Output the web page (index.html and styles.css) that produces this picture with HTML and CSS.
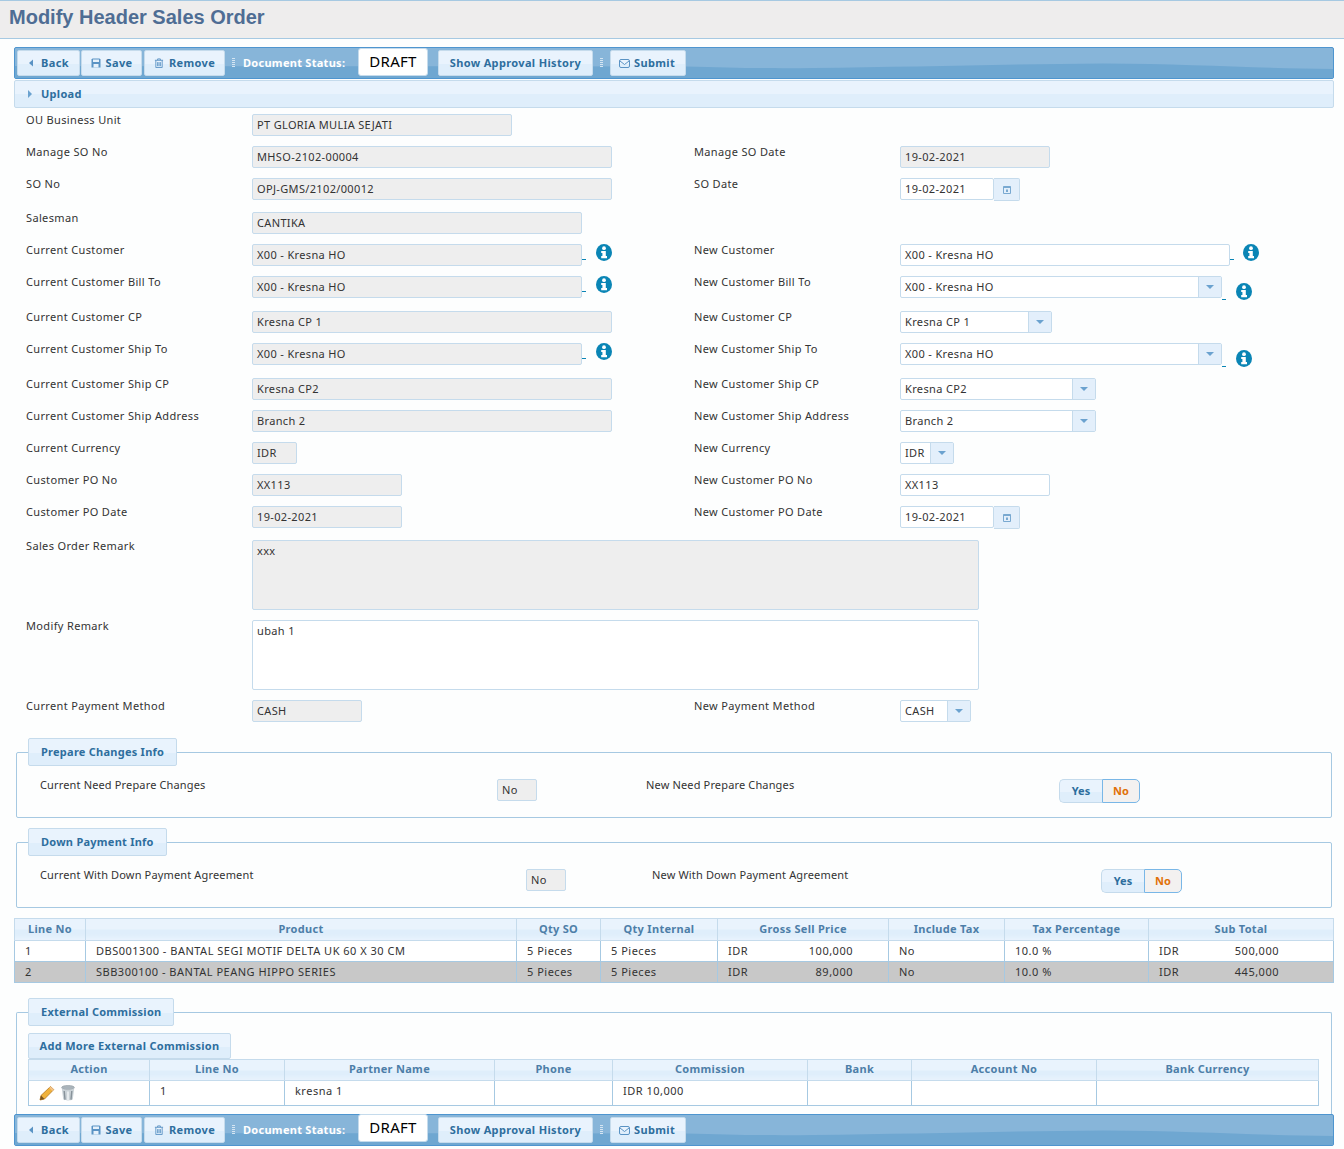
FILE: index.html
```html
<!DOCTYPE html>
<html lang="en">
<head>
<meta charset="utf-8">
<title>Modify Header Sales Order</title>
<link rel="stylesheet" href="styles.css">
</head>
<body>
<svg class="sprite" width="0" height="0" aria-hidden="true">
  <symbol id="i-back" viewBox="0 0 6 8"><path d="M5 0.5V7.5L1 4Z" fill="#5a93c4"/></symbol>
  <symbol id="i-save" viewBox="0 0 10 10"><path d="M1.5 0.5H8.5L9.5 1.5V9.5H0.5V1.5Z" fill="#5a93c4"/><rect x="2" y="1.5" width="6" height="2.5" fill="#e6f1fb"/><rect x="2.5" y="6" width="5" height="3.5" fill="#e6f1fb"/></symbol>
  <symbol id="i-trash" viewBox="0 0 10 11"><path d="M0.5 2.5H9.5M3.5 2.5V1H6.5V2.5M1.5 2.5V10.5H8.5V2.5M3.5 4.5V9M5 4.5V9M6.5 4.5V9" fill="none" stroke="#5a93c4"/></symbol>
  <symbol id="i-mail" viewBox="0 0 11 9"><rect x="0.5" y="0.5" width="10" height="8" rx="1.5" fill="none" stroke="#5a93c4"/><path d="M1 2L5.5 5.5L10 2" fill="none" stroke="#5a93c4"/></symbol>
  <symbol id="i-cal" viewBox="0 0 8 9"><path d="M0.5 1.5H7.5V8.5H0.5Z" fill="none" stroke="#79a9d1"/><path d="M0.5 1.5H7.5V3H0.5Z" fill="#79a9d1"/><rect x="3" y="4.5" width="2" height="2.5" fill="#79a9d1"/></symbol>
  <symbol id="i-info" viewBox="0 0 16 17"><ellipse cx="8" cy="8.5" rx="8" ry="8.5" fill="#0a85b5"/><circle cx="8" cy="4.2" r="1.9" fill="#fff"/><path d="M5.2 7H9.8V12H11V14.2H5.2V12H6.4V9.1H5.2Z" fill="#fff"/></symbol>
  <symbol id="i-pencil" viewBox="0 0 16 16"><path d="M1 15L2 10.5L11.5 1.5L14.8 4.6L5.5 14Z" fill="#f0b23c" stroke="#b5761c" stroke-width="0.8"/><path d="M11.5 1.5L14.8 4.6L13.4 6L10.2 2.8Z" fill="#f3c48e"/><path d="M1 15L2 10.5L5.5 14Z" fill="#7b5423"/></symbol>
  <symbol id="i-bin" viewBox="0 0 14 16"><ellipse cx="7" cy="2.6" rx="6.4" ry="2.2" fill="#aab4bb" stroke="#8d979e" stroke-width="0.6"/><path d="M0.8 3.2L2.2 14.2C3.4 15.8 10.6 15.8 11.8 14.2L13.2 3.2C10.5 5.2 3.5 5.2 0.8 3.2Z" fill="#c9d1d6"/><path d="M3.2 6L4 14.6M10.8 6L10 14.6" stroke="#87929a" stroke-width="1.4" fill="none"/><path d="M7 6.5V15" stroke="#eef2f4" stroke-width="1.6" fill="none"/></symbol>
  <symbol id="i-wave" viewBox="0 0 1320 30" preserveAspectRatio="none"><path d="M0 18L672 18.5C720 20 760 20.5 800 20C900 19 1000 16 1090 15.5C1180 16 1250 20.5 1320 21V30H0Z" fill="#6fa7d1"/></symbol>
</svg>

<header class="page-head"><h1>Modify Header Sales Order</h1></header>

<main class="content">
  <div class="toolbar">
    <svg class="wave"><use href="#i-wave"/></svg>
    <a class="btn btn-back"><svg class="ic-back"><use href="#i-back"/></svg>Back</a>
    <a class="btn btn-save"><svg class="ic"><use href="#i-save"/></svg>Save</a>
    <a class="btn btn-remove"><svg class="ic"><use href="#i-trash"/></svg>Remove</a>
    <span class="grip"></span>
    <span class="status-label">Document Status:</span>
    <span class="draft">DRAFT</span>
    <a class="btn btn-history">Show Approval History</a>
    <span class="grip grip-tight"></span>
    <a class="btn btn-submit"><svg class="ic-mail"><use href="#i-mail"/></svg>Submit</a>
  </div>

  <div class="upload"><i class="tri"></i>Upload</div>

  <section class="form">
    <div class="row"><label>OU Business Unit</label><div class="f ro w260">PT GLORIA MULIA SEJATI</div></div>
    <div class="row"><label>Manage SO No</label><div class="f ro w360">MHSO-2102-00004</div><label>Manage SO Date</label><div class="f ro w150">19-02-2021</div></div>
    <div class="row g11"><label>SO No</label><div class="f ro w360">OPJ-GMS/2102/00012</div><label>SO Date</label><div class="group"><div class="f w94">19-02-2021</div><span class="calbtn"><svg class="ic-cal"><use href="#i-cal"/></svg></span></div></div>
    <div class="row"><label>Salesman</label><div class="f ro w330">CANTIKA</div></div>
    <div class="row"><label>Current Customer</label><div class="group"><div class="f ro w330">X00 - Kresna HO</div><span class="us"></span><svg class="info"><use href="#i-info"/></svg></div><label>New Customer</label><div class="group"><div class="f w330">X00 - Kresna HO</div><span class="us"></span><svg class="info info-wide"><use href="#i-info"/></svg></div></div>
    <div class="row g11"><label>Current Customer Bill To</label><div class="group"><div class="f ro w330">X00 - Kresna HO</div><span class="us"></span><svg class="info"><use href="#i-info"/></svg></div><label>New Customer Bill To</label><div class="group"><div class="f combo w322">X00 - Kresna HO<b class="arrow"></b></div><span class="us us-low"></span><svg class="info info-low"><use href="#i-info"/></svg></div></div>
    <div class="row"><label>Current Customer CP</label><div class="f ro w360">Kresna CP 1</div><label>New Customer CP</label><div class="f combo w152">Kresna CP 1<b class="arrow"></b></div></div>
    <div class="row g11"><label>Current Customer Ship To</label><div class="group"><div class="f ro w330">X00 - Kresna HO</div><span class="us"></span><svg class="info"><use href="#i-info"/></svg></div><label>New Customer Ship To</label><div class="group"><div class="f combo w322">X00 - Kresna HO<b class="arrow"></b></div><span class="us us-low"></span><svg class="info info-low"><use href="#i-info"/></svg></div></div>
    <div class="row"><label>Current Customer Ship CP</label><div class="f ro w360">Kresna CP2</div><label>New Customer Ship CP</label><div class="f combo w196">Kresna CP2<b class="arrow"></b></div></div>
    <div class="row"><label>Current Customer Ship Address</label><div class="f ro w360">Branch 2</div><label>New Customer Ship Address</label><div class="f combo w196">Branch 2<b class="arrow"></b></div></div>
    <div class="row"><label>Current Currency</label><div class="f ro w45">IDR</div><label>New Currency</label><div class="f combo w54">IDR<b class="arrow"></b></div></div>
    <div class="row"><label>Customer PO No</label><div class="f ro w150">XX113</div><label>New Customer PO No</label><div class="f w150">XX113</div></div>
    <div class="row g11"><label>Customer PO Date</label><div class="f ro w150">19-02-2021</div><label>New Customer PO Date</label><div class="group"><div class="f w94">19-02-2021</div><span class="calbtn"><svg class="ic-cal"><use href="#i-cal"/></svg></span></div></div>
    <div class="row"><label>Sales Order Remark</label><div class="f ro area">xxx</div></div>
    <div class="row"><label>Modify Remark</label><div class="f area">ubah 1</div></div>
    <div class="row g16"><label>Current Payment Method</label><div class="f ro w110">CASH</div><label>New Payment Method</label><div class="f combo w71">CASH<b class="arrow"></b></div></div>
  </section>

  <fieldset class="box box-high">
    <legend>Prepare Changes Info</legend>
    <div class="info-row prep">
      <span>Current Need Prepare Changes</span>
      <div class="f ro w40">No</div>
      <span>New Need Prepare Changes</span>
      <div class="toggle"><span class="yes">Yes</span><span class="no">No</span></div>
    </div>
  </fieldset>

  <fieldset class="box">
    <legend>Down Payment Info</legend>
    <div class="info-row down">
      <span>Current With Down Payment Agreement</span>
      <div class="f ro w40">No</div>
      <span>New With Down Payment Agreement</span>
      <div class="toggle"><span class="yes">Yes</span><span class="no">No</span></div>
    </div>
  </fieldset>

  <table class="grid lines">
    <thead><tr><th>Line No</th><th>Product</th><th>Qty SO</th><th>Qty Internal</th><th>Gross Sell Price</th><th>Include Tax</th><th>Tax Percentage</th><th>Sub Total</th></tr></thead>
    <tbody>
      <tr><td>1</td><td>DBS001300 - BANTAL SEGI MOTIF DELTA UK 60 X 30 CM</td><td>5 Pieces</td><td>5 Pieces</td><td><div class="money gross"><span>IDR</span><span>100,000</span></div></td><td>No</td><td>10.0 %</td><td><div class="money sub"><span>IDR</span><span>500,000</span></div></td></tr>
      <tr class="sel"><td>2</td><td>SBB300100 - BANTAL PEANG HIPPO SERIES</td><td>5 Pieces</td><td>5 Pieces</td><td><div class="money gross"><span>IDR</span><span>89,000</span></div></td><td>No</td><td>10.0 %</td><td><div class="money sub"><span>IDR</span><span>445,000</span></div></td></tr>
    </tbody>
  </table>

  <fieldset class="box ext">
    <legend>External Commission</legend>
    <a class="add">Add More External Commission</a>
    <table class="grid comm">
      <thead><tr><th>Action</th><th>Line No</th><th>Partner Name</th><th>Phone</th><th>Commission</th><th>Bank</th><th>Account No</th><th>Bank Currency</th></tr></thead>
      <tbody><tr><td class="act"><svg class="pencil"><use href="#i-pencil"/></svg><svg class="bin"><use href="#i-bin"/></svg></td><td>1</td><td>kresna 1</td><td></td><td>IDR 10,000</td><td></td><td></td><td></td></tr></tbody>
    </table>
  </fieldset>

  <div class="toolbar toolbar-last">
    <svg class="wave"><use href="#i-wave"/></svg>
    <a class="btn btn-back"><svg class="ic-back"><use href="#i-back"/></svg>Back</a>
    <a class="btn btn-save"><svg class="ic"><use href="#i-save"/></svg>Save</a>
    <a class="btn btn-remove"><svg class="ic"><use href="#i-trash"/></svg>Remove</a>
    <span class="grip"></span>
    <span class="status-label">Document Status:</span>
    <span class="draft">DRAFT</span>
    <a class="btn btn-history">Show Approval History</a>
    <span class="grip grip-tight"></span>
    <a class="btn btn-submit"><svg class="ic-mail"><use href="#i-mail"/></svg>Submit</a>
  </div>
</main>
</body>
</html>
```

FILE: styles.css
```css
* { box-sizing: border-box; }
html, body { margin: 0; padding: 0; }
body {
  background: #fdfefe;
  color: #333;
  font: 11px/12px "Noto Sans", "DejaVu Sans", sans-serif;
  letter-spacing: 0.35px;
  overflow: hidden;
  height: 1149px;
}
.sprite { position: absolute; }

.page-head {
  height: 39px;
  background: #eeeded;
  border-top: 1px solid #a6c9e2;
  border-bottom: 1px solid #a6c9e2;
  padding: 4px 0 0 9px;
}
.page-head h1 {
  margin: 0;
  font: bold 20px/24px "Liberation Sans", Arial, sans-serif;
  letter-spacing: 0;
  color: #4f6d94;
}

.content { padding: 8px 10px 0 14px; }

.toolbar {
  position: relative;
  display: flex;
  align-items: center;
  height: 32px;
  background: #87b5d9;
  border: 1px solid #4e95cf;
  border-radius: 2px;
  padding-left: 2px;
}
.wave {
  position: absolute;
  left: 0;
  top: 0;
  width: 100%;
  height: 100%;
}
.btn {
  position: relative;
  display: flex;
  align-items: center;
  justify-content: center;
  height: 26px;
  background: linear-gradient(#e9f3fd 0 55%, #dfeefb 55% 100%);
  border: 1px solid #c5dbec;
  border-radius: 2px;
  color: #2e6e9e;
  font-weight: 700;
  letter-spacing: 0.35px;
  white-space: nowrap;
}
.btn-back { width: 63px; margin-right: 1px; }
.btn-save { width: 61px; margin-right: 2px; }
.btn-remove { width: 81px; }
.btn-history { width: 155px; margin-left: 10px; }
.btn-submit { width: 76px; padding-right: 2px; }
.ic-back { width: 6px; height: 8px; margin-right: 7px; }
.ic { width: 10px; height: 10px; margin-right: 5px; }
.ic-mail { width: 11px; height: 9px; margin-right: 4px; }
.ic-cal { width: 8px; height: 9px; }
.grip {
  position: relative;
  width: 3px;
  height: 10px;
  margin: 0 8px 0 7px;
  background: repeating-linear-gradient(#d5e5f2 0 1px, transparent 1px 2px);
}
.grip-tight { margin-right: 7px; }
.status-label {
  position: relative;
  width: 115px;
  color: #fff;
  font-weight: 700;
  letter-spacing: 0.28px;
}
.draft {
  position: relative;
  display: flex;
  align-items: center;
  justify-content: center;
  width: 70px;
  height: 28px;
  margin-top: -3px;
  padding-bottom: 1px;
  background: #fff;
  border: 1px solid #c5dbec;
  border-radius: 3px;
  color: #000;
  font: 15px/18px "Noto Sans", sans-serif;
  letter-spacing: 0.3px;
}
.toolbar-last .draft { margin-top: -5px; }

.upload {
  display: flex;
  align-items: center;
  height: 28px;
  margin-top: 1px;
  padding-left: 13px;
  background: linear-gradient(#e9f3fd 0 50%, #dfeefb 50% 100%);
  border: 1px solid #c5dbec;
  border-radius: 2px;
  color: #2e6e9e;
  font-weight: 700;
  letter-spacing: 0.3px;
}
.tri {
  width: 0;
  height: 0;
  margin-right: 9px;
  border-left: 4px solid #6ba2cf;
  border-top: 4px solid transparent;
  border-bottom: 4px solid transparent;
}

.form { padding: 6px 0 0 12px; }
.row {
  display: grid;
  grid-template-columns: 226px 442px 206px 1fr;
  margin-bottom: 10px;
  align-items: start;
}
.g11 { margin-bottom: 11px; }
.g16 { margin-bottom: 16px; }

.f {
  position: relative;
  height: 22px;
  padding: 0 4px;
  background: #fff;
  border: 1px solid #c5dbec;
  border-radius: 2px;
  line-height: 20px;
  white-space: nowrap;
}
.ro { background: #eeeeee; }
.w40 { width: 40px; }
.w45 { width: 45px; }
.w54 { width: 54px; }
.w71 { width: 71px; }
.w94 { width: 94px; }
.w110 { width: 110px; }
.w150 { width: 150px; }
.w152 { width: 152px; }
.w196 { width: 196px; }
.w260 { width: 260px; }
.w322 { width: 322px; }
.w330 { width: 330px; }
.w360 { width: 360px; }
.area {
  grid-column: 2 / 5;
  width: 727px;
  height: 70px;
  padding-top: 0;
}
.group { display: flex; align-items: flex-start; }
.calbtn {
  display: flex;
  align-items: center;
  justify-content: center;
  width: 26px;
  height: 23px;
  background: #e3effb;
  border: 1px solid #c5dbec;
  border-left: 0;
  border-radius: 0 2px 2px 0;
}
.combo { padding-right: 24px; }
.arrow {
  position: absolute;
  top: 0;
  right: 0;
  width: 23px;
  height: 20px;
  background: #e3effb;
  border-left: 1px solid #c5dbec;
}
.arrow::after {
  content: "";
  position: absolute;
  left: 7px;
  top: 8px;
  border-top: 4px solid #6ba2cf;
  border-left: 4px solid transparent;
  border-right: 4px solid transparent;
}
.us {
  width: 4px;
  height: 1px;
  margin-top: 15px;
  background: #0a85b5;
}
.us-low { margin-top: 23px; }
.info { width: 16px; height: 17px; margin-left: 10px; }
.info-wide { margin-left: 9px; }
.info-low { margin: 7px 0 0 10px; }

.box {
  margin: 0 2px 10px;
  padding: 13px 0 14px;
  min-width: 0;
  border: 1px solid #a6c9e2;
  border-radius: 2px;
}
.box-high { padding-top: 16px; }
.box legend {
  margin-left: 11px;
  padding: 0 12px;
  height: 28px;
  background: linear-gradient(#e9f3fd 0 55%, #dfeefb 55% 100%);
  border: 1px solid #c5dbec;
  border-radius: 2px;
  color: #2e6e9e;
  font-weight: 700;
  line-height: 26px;
  letter-spacing: 0.25px;
}
.box-high legend { margin-bottom: -3px; line-height: 25px; }
.info-row {
  display: grid;
  align-items: start;
  padding-left: 23px;
  letter-spacing: 0.15px;
}
.info-row .f { letter-spacing: 0.35px; }
.prep { grid-template-columns: 457px 149px 413px auto; }
.down { grid-template-columns: 486px 126px 449px auto; }
.toggle {
  display: flex;
  width: 81px;
  height: 24px;
  font-weight: 700;
  line-height: 22px;
  text-align: center;
  letter-spacing: 0;
}
.yes {
  width: 43px;
  background: linear-gradient(#e9f3fd 0 55%, #dfeefb 55% 100%);
  border: 1px solid #c5dbec;
  border-right: 0;
  border-radius: 5px 0 0 5px;
  color: #2e6e9e;
}
.no {
  width: 38px;
  background: #f3f1f0;
  border: 1px solid #79b7e7;
  border-radius: 0 5px 5px 0;
  color: #e17009;
}

.grid {
  table-layout: fixed;
  border-collapse: collapse;
}
.grid th {
  height: 22px;
  padding: 0 0 2px;
  background: linear-gradient(#e9f3fd 0 50%, #dfeefb 50% 70%, #e9f3fd 100%);
  border: 1px solid #c5dbec;
  color: #4d7ea8;
  font-weight: 700;
  letter-spacing: 0.3px;
  text-align: center;
}
.grid td {
  padding: 0 10px;
  background: #fff;
  border: 1px solid #a6c9e2;
  letter-spacing: 0.5px;
  white-space: nowrap;
}
.lines { width: 1319px; margin-bottom: 15px; }
.lines td { height: 21px; }
.lines tr.sel td { background: #c8c8c8; }
.lines th:nth-child(1) { width: 71px; }
.lines th:nth-child(2) { width: 431px; }
.lines th:nth-child(3) { width: 84px; }
.lines th:nth-child(4) { width: 117px; }
.lines th:nth-child(5) { width: 171px; }
.lines th:nth-child(6) { width: 116px; }
.lines th:nth-child(7) { width: 144px; }
.lines th:nth-child(8) { width: 185px; }
.money { display: flex; justify-content: space-between; }
.gross { width: 125px; }
.sub { width: 120px; }

.ext {
  margin-bottom: 0;
  padding: 7px 0 0 11px;
  height: 116px;
  border-bottom: 0;
  border-radius: 2px 2px 0 0;
}
.ext legend { margin-left: 0; }
.add {
  display: flex;
  align-items: center;
  justify-content: center;
  width: 203px;
  height: 26px;
  background: linear-gradient(#e9f3fd 0 55%, #dfeefb 55% 100%);
  border: 1px solid #c5dbec;
  border-radius: 2px;
  color: #2e6e9e;
  font-weight: 700;
  letter-spacing: 0.3px;
}
.comm { width: 1290px; }
.comm th { height: 21px; }
.comm td { height: 25px; padding-bottom: 4px; }
.comm th:nth-child(1) { width: 121px; }
.comm th:nth-child(2) { width: 135px; }
.comm th:nth-child(3) { width: 210px; }
.comm th:nth-child(4) { width: 118px; }
.comm th:nth-child(5) { width: 195px; }
.comm th:nth-child(6) { width: 104px; }
.comm th:nth-child(7) { width: 185px; }
.comm th:nth-child(8) { width: 222px; }
.comm .act { padding-bottom: 1px; padding-top: 0; }
.pencil { width: 16px; height: 16px; vertical-align: middle; }
.bin { width: 14px; height: 16px; margin-left: 6px; vertical-align: middle; }
```
